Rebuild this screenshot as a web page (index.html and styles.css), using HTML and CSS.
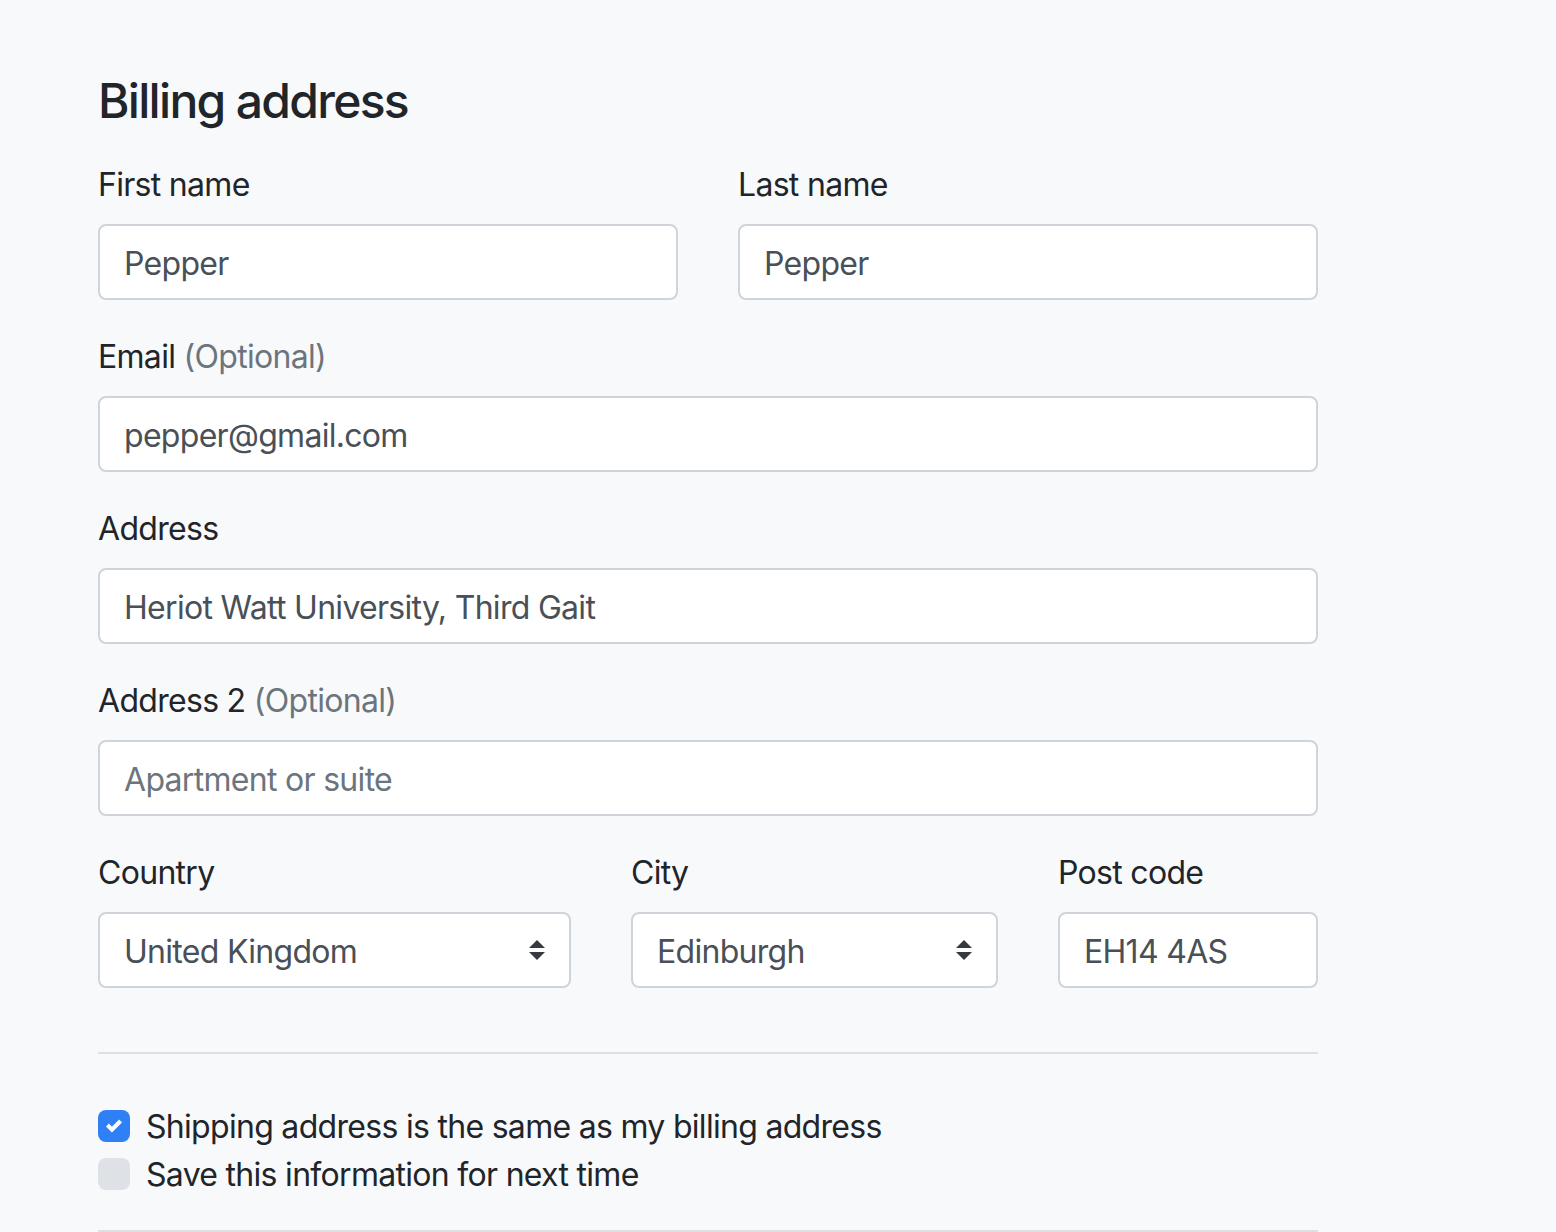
FILE: index.html
```html
<!DOCTYPE html>
<html lang="en">
<head>
<meta charset="utf-8">
<title>Billing address</title>
<link rel="stylesheet" href="styles.css">
</head>
<body>
<main class="page">
  <form class="form">
    <h4 class="title">Billing address</h4>
    <div class="row row-2">
      <div class="field">
        <label class="label" for="first">First name</label>
        <input class="control" id="first" type="text" value="Pepper">
      </div>
      <div class="field">
        <label class="label" for="last">Last name</label>
        <input class="control" id="last" type="text" value="Pepper">
      </div>
    </div>
    <div class="field">
      <label class="label" for="email">Email <span class="muted">(Optional)</span></label>
      <input class="control" id="email" type="text" value="pepper@gmail.com">
    </div>
    <div class="field">
      <label class="label" for="address">Address</label>
      <input class="control" id="address" type="text" value="Heriot Watt University, Third Gait">
    </div>
    <div class="field">
      <label class="label" for="address2">Address 2 <span class="muted">(Optional)</span></label>
      <input class="control" id="address2" type="text" placeholder="Apartment or suite">
    </div>
    <div class="row row-3">
      <div class="field">
        <label class="label">Country</label>
        <div class="control select">
          <span>United Kingdom</span>
          <svg class="arrows" width="16" height="20" viewBox="0 0 4 5"><path d="M2 0L0 2h4zm0 5L0 3h4z" fill="#343a40"/></svg>
        </div>
      </div>
      <div class="field">
        <label class="label">City</label>
        <div class="control select">
          <span>Edinburgh</span>
          <svg class="arrows" width="16" height="20" viewBox="0 0 4 5"><path d="M2 0L0 2h4zm0 5L0 3h4z" fill="#343a40"/></svg>
        </div>
      </div>
      <div class="field">
        <label class="label" for="zip">Post code</label>
        <input class="control" id="zip" type="text" value="EH14 4AS">
      </div>
    </div>
    <hr class="divider">
    <div class="check">
      <span class="box checked">
        <svg width="16" height="16" viewBox="0 0 8 8"><path fill="#fff" d="M6.564.75l-3.59 3.612-1.538-1.55L0 4.26 2.974 7.25 8 2.193z"/></svg>
      </span>
      <span class="check-label">Shipping address is the same as my billing address</span>
    </div>
    <div class="check">
      <span class="box"></span>
      <span class="check-label">Save this information for next time</span>
    </div>
    <hr class="divider bottom">
  </form>
</main>
</body>
</html>
```
FILE: styles.css
```css
* { box-sizing: border-box; }
html, body {
  margin: 0;
  background: #f8f9fa;
}
body {
  font-family: Inter, "Noto Sans", "Liberation Sans", sans-serif;
  color: #212529;
  font-size: 32px;
  line-height: 1.5;
  letter-spacing: -0.7px;
}
.page {
  padding: 70px 0 0 98px;
}
.form {
  width: 1220px;
}
.title {
  margin: 0 0 30px;
  padding-top: 2px;
  font-size: 48px;
  font-weight: 500;
  line-height: 1.2;
  letter-spacing: -1.7px;
}
.row {
  display: grid;
  column-gap: 60px;
}
.row-2 { grid-template-columns: 1fr 1fr; }
.row-3 { grid-template-columns: 473px 367px 260px; }
.field {
  margin-bottom: 32px;
}
.label {
  display: inline-block;
  margin-bottom: 15px;
  padding-top: 1px;
  font-size: 32px;
  line-height: 48px;
}
.muted { color: #6c757d; }
.control {
  display: block;
  width: 100%;
  height: 76px;
  padding: 14px 24px 10px;
  font-family: inherit;
  font-size: 32px;
  line-height: 48px;
  letter-spacing: -0.7px;
  color: #495057;
  background: #fff;
  border: 2px solid #ced4da;
  border-radius: 8px;
  outline: none;
  margin: 0;
}
.control::placeholder { color: #6c757d; opacity: 1; }
.select {
  display: flex;
  align-items: center;
  justify-content: space-between;
}
.select .arrows { margin-top: -4px; }
.divider {
  margin: 32px 0 48px;
  border: 0;
  border-top: 2px solid rgba(0,0,0,.1);
  height: 0;
}
.divider.bottom { margin: 32px 0 0; }
.check {
  display: flex;
  align-items: flex-start;
  min-height: 48px;
}
.box {
  flex: none;
  width: 32px;
  height: 32px;
  margin-top: 8px;
  margin-right: 16px;
  border-radius: 8px;
  background: #dee2e6;
  display: flex;
  align-items: center;
  justify-content: center;
}
.box.checked { background: #2f7ff7; }
.check-label {
  padding-top: 2px;
  line-height: 46px;
}
```
